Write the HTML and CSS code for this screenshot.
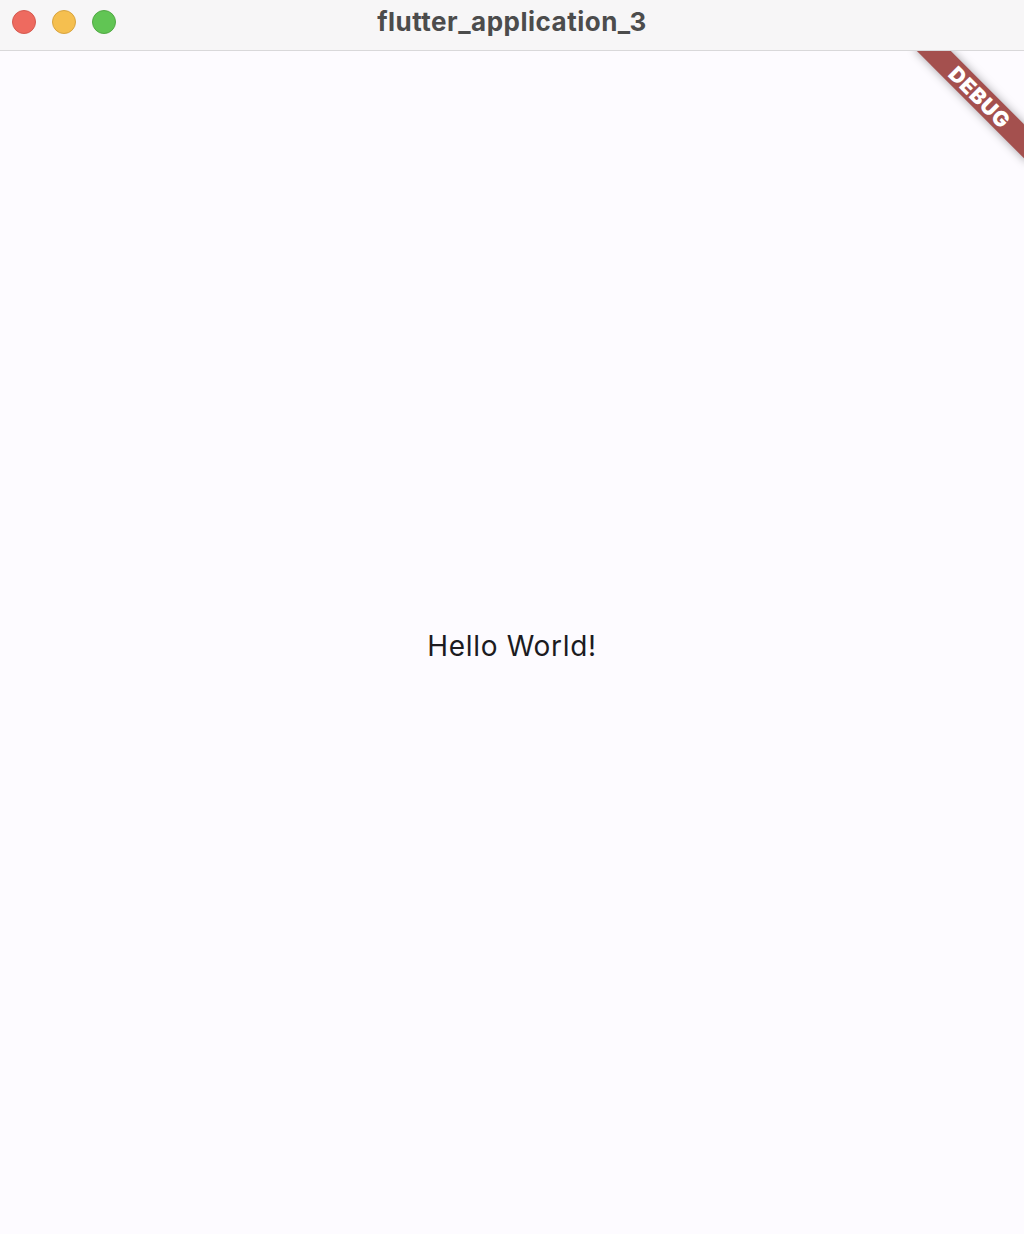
FILE: index.html
```html
<!DOCTYPE html>
<html lang="en">
<head>
<meta charset="utf-8">
<title>flutter_application_3</title>
<link rel="stylesheet" href="styles.css">
</head>
<body>
<div class="window">
  <header class="titlebar">
    <div class="lights">
      <span class="light red"></span>
      <span class="light yellow"></span>
      <span class="light green"></span>
    </div>
    <div class="title">flutter_application_3</div>
  </header>
  <main class="content">
    <p class="hello">Hello World!</p>
    <div class="banner"><span>DEBUG</span></div>
  </main>
</div>
</body>
</html>
```
FILE: styles.css
```css
html, body {
  margin: 0;
  padding: 0;
  height: 100%;
}
body {
  font-family: Inter, "Noto Sans", "Liberation Sans", sans-serif;
  background: #fdfbff;
}
.window {
  display: flex;
  flex-direction: column;
  width: 1024px;
  height: 1234px;
  overflow: hidden;
}
.titlebar {
  position: relative;
  flex: 0 0 auto;
  height: 51px;
  box-sizing: border-box;
  background: #f7f6f7;
  border-bottom: 1px solid #d9d8da;
  display: flex;
  align-items: center;
  justify-content: center;
}
.lights {
  position: absolute;
  left: 12px;
  top: 10px;
  display: flex;
  gap: 16px;
}
.light {
  width: 24px;
  height: 24px;
  border-radius: 50%;
  box-sizing: border-box;
}
.red { background: #ee6a5f; border: 1px solid #d55a50; }
.yellow { background: #f5bf4f; border: 1px solid #d8a440; }
.green { background: #61c554; border: 1px solid #52a945; }
.title {
  font-family: Inter, "Noto Sans", sans-serif;
  font-weight: 700;
  font-size: 26px;
  letter-spacing: 0.5px;
  color: #4c4c4c;
  margin-top: -8px;
}
.content {
  position: relative;
  flex: 1 1 auto;
  display: flex;
  align-items: center;
  justify-content: center;
  overflow: hidden;
  background: #fdfbff;
}
.hello {
  margin: 0;
  font-size: 28px;
  color: #1c1b1f;
  letter-spacing: 0.7px;
  transform: translateY(3px);
}
.banner {
  position: absolute;
  top: 0;
  left: 0;
  width: 160px;
  height: 24px;
  background: #a4504e;
  box-shadow: 0 0 10px rgba(0, 0, 0, 0.35);
  transform-origin: 0 0;
  transform: translate(1028px, -2px) rotate(45deg) translate(-80px, 56px);
  display: flex;
  align-items: center;
  justify-content: center;
}
.banner span {
  font-family: Inter, "Noto Sans", sans-serif;
  font-weight: 900;
  font-size: 21px;
  color: #ffffff;
  letter-spacing: 0.8px;
  line-height: 1;
}
```
